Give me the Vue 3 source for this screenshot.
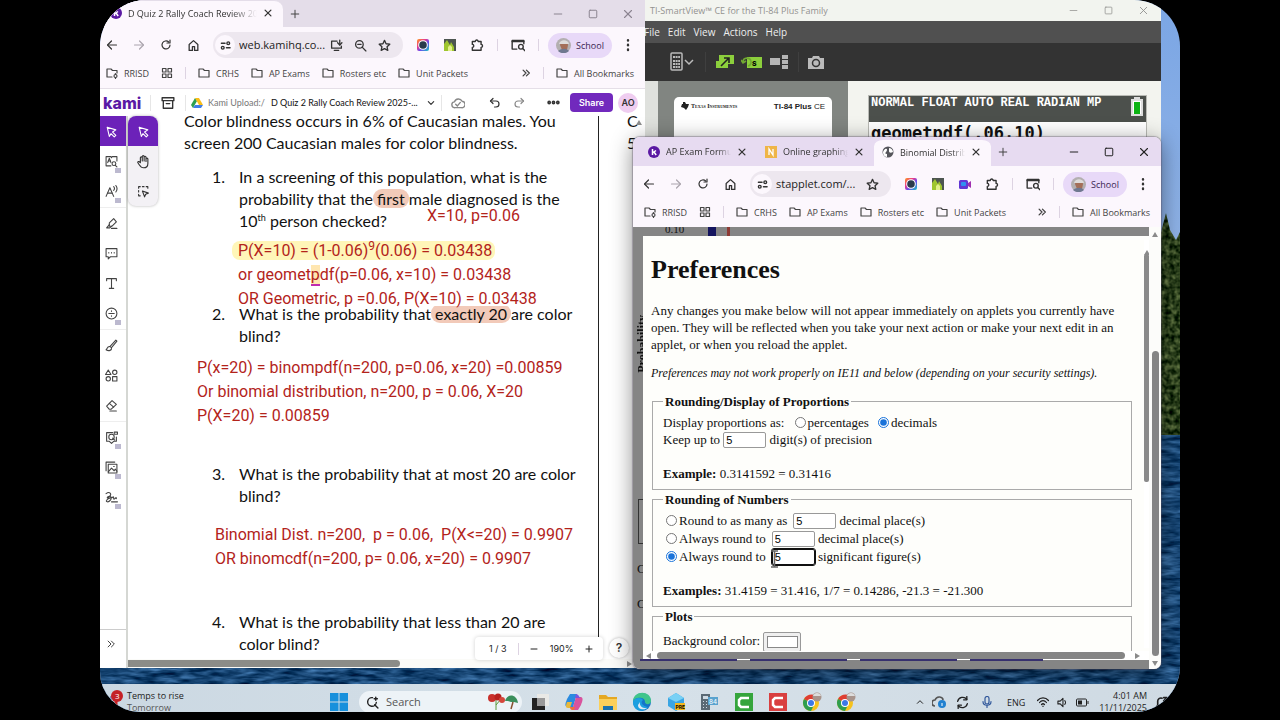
<script setup>
import { h, ref } from 'vue'

const shapes = {
  back: ['M21 12H4', 'M11 4l-8 8 8 8'],
  forward: ['M3 12h17', 'M13 4l8 8-8 8'],
  reload: ['M20 12a8 8 0 1 1-2.6-6', 'M20 2v6h-6'],
  home: ['M4 21V10l8-7 8 7v11h-6v-7h-4v7z'],
  tune: ['M3 7h8', 'M14 17h8', 'M15 7a3 3 0 1 0 6 0a3 3 0 1 0-6 0', 'M3 17a3 3 0 1 0 6 0a3 3 0 1 0-6 0'],
  install: ['M13 4H3v13h18v-4', 'M8 21h8', 'M18 2v9', 'M14 7l4 4 4-4'],
  zoomOut: ['M3 10a7 7 0 1 0 14 0a7 7 0 1 0-14 0', 'M15 15l7 7', 'M7 10h6'],
  star: ['M12 2.500l2.900 6.300 6.900.800-5.100 4.700 1.400 6.800-6.100-3.400-6.100 3.400 1.400-6.800L2.200 9.600l6.900-.800z'],
  puzzle: ['M4 6h5a2.500 2.500 0 1 1 5 0h5v5a2.500 2.500 0 1 1 0 5v5H4v-5a2.500 2.500 0 0 0 0-5z'],
  lens: ['M10 19H2V4h20v6', 'M2 6h20', 'M13 15a4 4 0 1 0 8 0a4 4 0 1 0-8 0', 'M20 18l4 4'],
  dots: ['M12 3.500v1', 'M12 11.500v1', 'M12 19.500v1'],
  close: ['M5 5l14 14', 'M19 5L5 19'],
  plus: ['M12 3v18', 'M3 12h18'],
  minus: ['M3 12h18'],
  square: ['M5 3h14a2 2 0 0 1 2 2v14a2 2 0 0 1-2 2H5a2 2 0 0 1-2-2V5a2 2 0 0 1 2-2z'],
  folder: ['M2 20V4h8l3 3h9v13z'],
  folderGear: ['M12 20H2V4h8l3 3h9v5', 'M16 18a3 3 0 1 0 6 0a3 3 0 1 0-6 0', 'M19 13v2', 'M19 21v2'],
  grid: ['M3 3h7v7H3z', 'M14 3h7v7h-7z', 'M3 14h7v7H3z', 'M14 14h7v7h-7z'],
  more: ['M5 5l7 7-7 7', 'M13 5l7 7-7 7'],
  archive: ['M2 3h20v5H2z', 'M4 8v13h16V8', 'M9 13h6'],
  down: ['M4 8l8 8 8-8'],
  up: ['M4 16l8-8 8 8'],
  cloud: ['M7 20a5 5 0 0 1-1-10a7 7 0 0 1 13-1a5.500 5.500 0 0 1-1 11z', 'M8 14l3 3 5-6'],
  undo: ['M8 3L3 8l5 5', 'M3 8h11a6 6 0 0 1 0 12h-3'],
  redo: ['M16 3l5 5-5 5', 'M21 8H10a6 6 0 0 0 0 12h3'],
  ellipsis: ['M2 12a2 2 0 1 0 4 0a2 2 0 1 0-4 0', 'M10 12a2 2 0 1 0 4 0a2 2 0 1 0-4 0', 'M18 12a2 2 0 1 0 4 0a2 2 0 1 0-4 0'],
  pointer: ['M4 4l16 5-6 4 6 6-3 3-6-6-3 5z'],
  hand: ['M7 14V6a1.500 1.500 0 0 1 3 0v5V4a1.500 1.500 0 0 1 3 0v7V5a1.500 1.500 0 0 1 3 0v7V8a1.500 1.500 0 0 1 3 0v7c0 5-3 7-7 7c-5 0-6-4-9-8c-1-2 2-3 4 0z'],
  marquee: ['M3 6V3h3', 'M10 3h3', 'M17 3h3v3', 'M3 10v3', 'M3 17v3h3', 'M10 11l11 4-5 2-2 5z'],
  reader: ['M11 20H2V3h9l1 2 1-2h9v8', 'M5 14l3-8 3 8', 'M6 11h4', 'M13 16a3.500 3.500 0 1 0 7 0a3.500 3.500 0 1 0-7 0', 'M19 19l3 3'],
  speech: ['M2 21L9 5l7 16', 'M5 15h8', 'M16 3c2 2 2 5 0 7', 'M20 1c3 4 3 8 0 12'],
  marker: ['M8 11l8-8 5 6-8 8H8z', 'M8 14l-5 6h6l3-3', 'M12 21h10'],
  comment: ['M2 3h20v15H10l-4 4v-4H2z', 'M7 10v1', 'M12 10v1', 'M17 10v1'],
  text: ['M3 7V3h18v4', 'M12 3v18', 'M8 21h8'],
  maths: ['M2 12a10 10 0 1 0 20 0a10 10 0 1 0-20 0', 'M7 12h10', 'M12 7v1', 'M12 16v1'],
  brush: ['M9 14L20 2l2 2-10 12z', 'M9 14c-5-1-5 5-7 6c5 3 11 1 10-4'],
  shapes: ['M6 2l5 8H1z', 'M14 6a4 4 0 1 0 8 0a4 4 0 1 0-8 0', 'M2 18a4 4 0 1 0 8 0a4 4 0 1 0-8 0', 'M14 14h8v8h-8z'],
  eraser: ['M3 13L13 3l8 7-10 9H8z', 'M8 8l8 7', 'M9 22h12'],
  question: ['M14 3H3v16h5l4 4 4-4h5v-8', 'M7 11a5 5 0 1 0 10 0a5 5 0 1 0-10 0', 'M14 13l4 4', 'M17 2h6v4h-6z'],
  image: ['M6 6h16v16H6z', 'M2 18V2h16', 'M6 20l6-7 5 5 2-3 3 4', 'M16 10h1'],
  signature: ['M2 5c6-5 12 0 6 6c-3 3-5 2-3 0c4-3 9 0 5 6c-4 5-9 3-7 0c3-5 8-3 12-6c2-1 0 5 2 4s4-5 4-1', 'M12 20h11'],
  wifi: ['M1 9c6-7 16-7 22 0', 'M5 13c4-5 10-5 14 0', 'M9 17c2-2 4-2 6 0', 'M12 20v1'],
  speaker: ['M2 9h5l6-6v18l-6-6H2z', 'M17 8c2 2 2 6 0 8'],
  mic: ['M8 5a4 4 0 0 1 8 0v7a4 4 0 0 1-8 0z', 'M4 11c0 10 16 10 16 0', 'M12 19v4'],
  sync: ['M3 10c2-8 12-10 17-4', 'M20 1v6h-6', 'M21 14c-2 8-12 10-17 4', 'M4 23v-6h6'],
  search: ['M19 12a8 8 0 1 1-7-9', 'M16 16l6 6', 'M18 2v6', 'M15 5h6'],
  bell: ['M3 19h17', 'M5 19V10a6 6 0 0 1 8-6', 'M19 13v6', 'M10 22h4', 'M16 3h6l-6 6h6']
}

const Icon = (p) =>
  h(
    'svg',
    { viewBox: '0 0 24 24', width: p.size, height: p.size, fill: 'none', stroke: 'currentColor', 'stroke-width': p.w || 2.4, 'stroke-linecap': 'round', 'stroke-linejoin': 'round', 'aria-hidden': 'true' },
    shapes[p.name].map((d) => h('path', { d }))
  )
Icon.props = ['name', 'size', 'w']

const browsers = [
  {
    id: 'kami',
    url: 'web.kamihq.co...',
    boxIcons: ['install', 'zoomOut', 'star'],
    tabs: [{ title: 'D Quiz 2 Rally Coach Review 2025', icon: 'kami', active: true }],
    extras: ['ring', 'house']
  },
  {
    id: 'applet',
    url: 'stapplet.com/...',
    boxIcons: ['star'],
    tabs: [
      { title: 'AP Exam Formula Sheet', icon: 'kami' },
      { title: 'Online graphing calc', icon: 'note' },
      { title: 'Binomial Distribution', icon: 'globe', active: true }
    ],
    extras: ['ring', 'house', 'camera']
  }
]
const bookmarks = ['CRHS', 'AP Exams', 'Rosters etc', 'Unit Packets']
const toolGroups = [
  [{ n: 'pointer', on: true }, { n: 'reader', lock: true }, { n: 'speech', lock: true }],
  [{ n: 'marker' }, { n: 'comment' }, { n: 'text' }, { n: 'maths', lock: true }],
  [{ n: 'brush' }, { n: 'shapes' }, { n: 'eraser' }],
  [{ n: 'question', lock: true }, { n: 'image', lock: true }, { n: 'signature', lock: true }]
]
const display = ref('decimals')
const digits = ref('5')
const mode = ref('sig')
const rounding = ref([
  { id: 'many', label: 'Round to as many as', unit: 'decimal place(s)', value: '5' },
  { id: 'dec', label: 'Always round to', unit: 'decimal place(s)', value: '5' },
  { id: 'sig', label: 'Always round to', unit: 'significant figure(s)', value: '5' }
])
</script>

<template>
  <div class="stage">
    <main class="desktop">
      <svg class="wallpaper" aria-hidden="true">
        <defs>
          <linearGradient id="sky" x1="0" y1="0" x2="0" y2="1">
            <stop offset="0" stop-color="#7ba6e4" />
            <stop offset="1" stop-color="#b4c9ea" />
          </linearGradient>
          <filter id="water" x="0" y="0" width="100%" height="100%" color-interpolation-filters="sRGB">
            <feTurbulence type="fractalNoise" baseFrequency="0.05 0.22" numOctaves="3" seed="7" />
            <feColorMatrix values="0.5 0 0 0 -0.16  0.6 0 0 0 -0.03  0.7 0 0 0 0.1  0 0 0 0 1" />
          </filter>
          <filter id="forest" x="0" y="0" width="100%" height="100%" color-interpolation-filters="sRGB">
            <feTurbulence type="fractalNoise" baseFrequency="0.2" numOctaves="2" seed="3" />
            <feColorMatrix values="0.7 0 0 0 -0.18  0.7 0 0 0 -0.1  0.5 0 0 0 -0.14  0 0 0 0 1" />
            <feComposite in2="SourceGraphic" operator="in" />
          </filter>
        </defs>
        <rect width="100%" height="100%" fill="url(#sky)" />
        <rect y="430" width="100%" height="290" filter="url(#water)" />
        <path d="M1055 260L1062 228 1066 213 1070 230 1076 240 1080 232V435H1055z" filter="url(#forest)" />
      </svg>

      <section class="window smartview">
        <header class="sv-title">
          <span>TI-SmartView™ CE for the TI-84 Plus Family</span>
          <div class="controls">
            <button aria-label="Minimize"><Icon name="minus" size="9" w="2" /></button>
            <button aria-label="Maximize"><Icon name="square" size="9" w="2" /></button>
            <button aria-label="Close"><Icon name="close" size="11" w="2" /></button>
          </div>
        </header>
        <nav class="sv-menu">
          <a v-for="m in ['File', 'Edit', 'View', 'Actions', 'Help']" :key="m" href="#">{{ m }}</a>
        </nav>
        <div class="sv-tools">
          <svg width="26" height="20" viewBox="0 0 26 20" aria-hidden="true">
            <rect x="1" y="1" width="11" height="17" rx="1" fill="none" stroke="#bbb" stroke-width="1.500" />
            <path d="M3 5h7M3 9h7M3 12h7M3 15h7" stroke="#bbb" stroke-width="1.800" stroke-dasharray="2 .6" />
            <path d="M15 8l4 4 4-4" fill="none" stroke="#bbb" stroke-width="1.500" />
          </svg>
          <i></i>
          <svg width="20" height="14" viewBox="0 0 20 14" aria-hidden="true">
            <path d="M4 0h15v9H4zM1 6h12v7H1z" fill="#8ccf3c" />
            <path d="M6 11l8-8M9 3h5v5" fill="none" stroke="#222" stroke-width="1.600" />
          </svg>
          <svg width="22" height="14" viewBox="0 0 22 14" aria-hidden="true">
            <path d="M6 2h15v11H6z" fill="#8ccf3c" />
            <path d="M2 7a4 4 0 1 1 5 4M0 5l2 3 3-2" fill="none" stroke="#71a832" stroke-width="1.600" />
            <text x="11" y="11" font-size="9" font-weight="700" font-family="Roboto">s</text>
          </svg>
          <svg width="20" height="16" viewBox="0 0 20 16" aria-hidden="true">
            <path d="M1 4h10v7H1zM13 1h6v4h-6zM13 6h6v4h-6zM13 11h6v4h-6z" fill="#b5b5b5" />
          </svg>
          <i></i>
          <svg width="16" height="15" viewBox="0 0 16 15" aria-hidden="true">
            <path d="M0 3h4l1-2h6l1 2h4v11H0z" fill="#bbb" />
            <circle cx="8" cy="8" r="3.500" fill="none" stroke="#333" stroke-width="1.500" />
          </svg>
        </div>
        <div class="sv-body">
          <div class="sv-keys">
            <div class="calculator">
              <svg width="8" height="8" viewBox="0 0 8 8" aria-hidden="true"><path d="M2 0h2l1 2h3l-1 3-2 3-2-2-3-1 1-3h1z" fill="#222" /></svg>
              <b class="ti">Texas Instruments</b>
              <span class="model"><b>TI-84 Plus</b> CE</span>
            </div>
          </div>
          <div class="sv-screen">
            <div class="lcd">
              <div class="status">
                <span>NORMAL FLOAT AUTO REAL RADIAN MP</span>
                <svg width="12" height="20" viewBox="0 0 12 20" aria-hidden="true">
                  <path d="M3 0h6v2h3v17H0V2h3z" fill="#ddd" /><path d="M2 4h8v13H2z" fill="#fff" /><path d="M3 5h6v12H3z" fill="#0db314" />
                </svg>
              </div>
              <div class="entry">geometpdf(.06,10)</div>
            </div>
          </div>
        </div>
      </section>

      <section v-for="b in browsers" :key="b.id" class="window chrome" :class="b.id">
        <header class="strip">
          <div v-for="t in b.tabs" :key="t.title" class="tab" :class="{ active: t.active }">
            <svg v-if="t.icon === 'kami'" width="12" height="12" viewBox="0 0 12 12" aria-hidden="true">
              <circle cx="6" cy="6" r="6" fill="#5b19a3" />
              <path d="M4.500 3v6M8 4.500L5 6.700M6 6l2.200 3" stroke="#fff" stroke-width="1.500" fill="none" />
            </svg>
            <svg v-else-if="t.icon === 'note'" width="12" height="12" viewBox="0 0 12 12" aria-hidden="true">
              <rect width="12" height="12" fill="#efb548" />
              <path d="M4 9V3l4 6V3" stroke="#fff" stroke-width="1.300" fill="none" />
            </svg>
            <svg v-else width="12" height="12" viewBox="0 0 12 12" aria-hidden="true">
              <circle cx="6" cy="6" r="5.500" fill="#55555b" />
              <path d="M2 4c3-3 4 0 2 2c-1 1-1 2 1 2v3c-3 0-4-3-4-5zM7 2c3 0 4 3 4 4c-2 1-4 1-4-1z" fill="#fff" />
            </svg>
            <span class="tab-title">{{ t.title }}</span>
            <button aria-label="Close tab"><Icon name="close" size="10" w="3" /></button>
          </div>
          <button class="new-tab" aria-label="New tab"><Icon name="plus" size="10" w="2.400" /></button>
          <div class="controls">
            <button aria-label="Minimize"><Icon name="minus" size="10" w="2.400" /></button>
            <button aria-label="Maximize"><Icon name="square" size="10" w="2.400" /></button>
            <button aria-label="Close"><Icon name="close" size="12" w="2.200" /></button>
          </div>
        </header>

        <div class="toolbar">
          <button aria-label="Back"><Icon name="back" size="12" /></button>
          <button aria-label="Forward" class="dim"><Icon name="forward" size="12" /></button>
          <button aria-label="Reload"><Icon name="reload" size="12" /></button>
          <button aria-label="Home"><Icon name="home" size="13" /></button>
          <div class="omnibox">
            <span class="site"><Icon name="tune" size="11" w="3" /></span>
            <input type="text" aria-label="Address" :value="b.url" />
            <button v-for="i in b.boxIcons" :key="i" :aria-label="i"><Icon :name="i" size="13" /></button>
          </div>
          <template v-for="e in b.extras" :key="e">
            <svg v-if="e === 'ring'" width="14" height="14" viewBox="0 0 14 14" aria-hidden="true">
              <defs>
                <linearGradient :id="'rb' + b.id" x1="0" y1="0" x2="1" y2="1">
                  <stop offset="0" stop-color="#ff9b1a" /><stop offset=".35" stop-color="#ea3a8c" /><stop offset=".6" stop-color="#6a4df0" /><stop offset="1" stop-color="#18c8c0" />
                </linearGradient>
              </defs>
              <rect x="1" y="1" width="12" height="12" rx="2" :fill="`url(#rb${b.id})`" />
              <circle cx="7" cy="7" r="4.800" fill="#fff" /><circle cx="7" cy="7" r="3.800" fill="#2a3a4c" />
            </svg>
            <svg v-else-if="e === 'house'" width="14" height="14" viewBox="0 0 14 14" aria-hidden="true">
              <rect x="1" y="1" width="12" height="12" fill="#4d5550" />
              <path d="M1 13V6l3-4 3 5 1-3 3 5v4z" fill="#9fc62f" /><path d="M5 13V9l2-2 2 2v4z" fill="#e2f08a" />
            </svg>
            <svg v-else width="14" height="14" viewBox="0 0 14 14" aria-hidden="true">
              <rect x="1" y="3" width="9" height="9" rx="1.500" fill="#6136d4" /><path d="M10 6l3-2v7l-3-2z" fill="#a02fb0" /><rect x="3" y="5" width="5" height="4" rx="1" fill="#2f8ff0" />
            </svg>
          </template>
          <button aria-label="Extensions"><Icon name="puzzle" size="14" /></button>
          <i class="bar"></i>
          <button aria-label="Search with Lens"><Icon name="lens" size="14" /></button>
          <i class="bar tight"></i>
          <button class="profile">
            <svg width="15" height="15" viewBox="0 0 15 15" aria-hidden="true">
              <circle cx="7.500" cy="7.500" r="7.500" fill="#b3afb0" />
              <path d="M4 7c0-5 8-5 8 0l-1 5H6z" fill="#a46f58" /><path d="M3 6c1-5 9-5 10 0z" fill="#dedcda" /><path d="M2 13c4-3 8-3 11 0a8 8 0 0 1-11 0z" fill="#6f7890" />
            </svg>
            School
          </button>
          <button aria-label="Menu"><Icon name="dots" size="14" w="4" /></button>
        </div>

        <nav class="bookmarks">
          <a href="#"><Icon name="folderGear" size="12" />RRISD</a>
          <a href="#" aria-label="Tab groups"><Icon name="grid" size="12" /></a>
          <i class="bar"></i>
          <a v-for="m in bookmarks" :key="m" href="#"><Icon name="folder" size="12" />{{ m }}</a>
          <a href="#" class="push" aria-label="More"><Icon name="more" size="10" w="3" /></a>
          <i class="bar"></i>
          <a href="#"><Icon name="folder" size="12" />All Bookmarks</a>
        </nav>

        <template v-if="b.id === 'kami'">
          <div class="kami-head">
            <b class="logo">kami</b>
            <i class="bar"></i>
            <button aria-label="Files"><Icon name="archive" size="14" /></button>
            <i class="bar"></i>
            <svg class="drive" width="12" height="12" viewBox="0 0 12 12" aria-hidden="true">
              <path d="M4 1L0 8l2 3 4-7z" fill="#2c9f50" /><path d="M4 1h4l4 7H8z" fill="#f9bd19" /><path d="M2 11l2-3h8l-2 3z" fill="#3f7de8" />
            </svg>
            <span class="crumb">Kami Upload:/</span>
            <span class="file">D Quiz 2 Rally Coach Review 2025-...</span>
            <button aria-label="File menu" class="caret"><Icon name="down" size="8" w="3.500" /></button>
            <i class="bar"></i>
            <button aria-label="Saved" class="cloud"><Icon name="cloud" size="14" /></button>
            <button aria-label="Undo" class="undo"><Icon name="undo" size="12" /></button>
            <button aria-label="Redo" class="cloud"><Icon name="redo" size="12" /></button>
            <button aria-label="More" class="ell"><Icon name="ellipsis" size="13" w="3" /></button>
            <button class="share">Share</button>
            <span class="who">AO</span>
          </div>

          <div class="kami-body">
            <aside class="side">
              <div v-for="(g, k) in toolGroups" :key="k" class="group">
                <button v-for="t in g" :key="t.n" :class="{ on: t.on }" :aria-label="t.n">
                  <Icon :name="t.n" size="13" w="2" />
                  <span v-if="t.lock" class="lock"></span>
                </button>
              </div>
              <button class="expand" aria-label="Expand"><Icon name="more" size="10" w="2.400" /></button>
            </aside>

            <div class="viewer">
              <div class="pages">
                <article class="page">
                  <p>Color blindness occurs in 6% of Caucasian males. You<br />screen 200 Caucasian males for color blindness.</p>
                  <ol>
                    <li>In a screening of this population, what is the<br />probability that the <mark>first</mark> male diagnosed is the<br />10<sup>th</sup> person checked?</li>
                    <li>What is the probability that <mark class="low">exactly 20</mark> are color<br />blind?</li>
                    <li>What is the probability that at most 20 are color<br />blind?</li>
                    <li>What is the probability that less than 20 are<br />color blind?</li>
                  </ol>
                  <div class="note n1">X=10, p=0.06</div>
                  <div class="note n2">
                    <span class="glow">P(X=10) = (1-0.06)<sup>9</sup>(0.06) = 0.03438</span><br />or geomet<u>p</u>df(p=0.06, x=10) = 0.03438<br />OR Geometric, p =0.06, P(X=10) = 0.03438
                  </div>
                  <div class="note n3">P(x=20) = binompdf(n=200, p=0.06, x=20) =0.00859<br />Or binomial distribution, n=200, p = 0.06, X=20<br />P(X=20) = 0.00859</div>
                  <div class="note n4">Binomial Dist. n=200,&nbsp; p = 0.06,&nbsp; P(X&lt;=20) = 0.9907<br />OR binomcdf(n=200, p= 0.06, x=20) = 0.9907</div>
                </article>
                <article class="page next"><p>C<br />5</p></article>
              </div>
              <div class="hscroll"><span></span><i class="tri right"></i></div>
              <div class="palette">
                <button class="on" aria-label="Select"><Icon name="pointer" size="13" w="2" /></button>
                <button aria-label="Pan"><Icon name="hand" size="15" w="1.800" /></button>
                <button aria-label="Marquee"><Icon name="marquee" size="13" w="2" /></button>
              </div>
              <i class="tri top vtop"></i>
              <div class="pager">
                <span>1 / 3</span><i class="bar"></i>
                <button aria-label="Zoom out"><Icon name="minus" size="8" w="3" /></button>
                <span>190%</span>
                <button aria-label="Zoom in"><Icon name="plus" size="8" w="3" /></button>
              </div>
              <button class="help" aria-label="Help">?</button>
            </div>
          </div>
        </template>

        <div v-else class="applet-body">
          <span class="axis">0.10</span>
          <span class="col blue"></span>
          <span class="col red"></span>
          <span class="prob">Probability</span>
          <span class="frag f1">C</span>
          <span class="frag f2">C</span>
          <span class="frame"></span>
          <div class="dialog">
            <form class="prefs" @submit.prevent>
              <h1>Preferences</h1>
              <p>Any changes you make below will not appear immediately on applets you currently have<br />open. They will be reflected when you take your next action or make your next edit in an<br />applet, or when you reload the applet.</p>
              <p><em>Preferences may not work properly on IE11 and below (depending on your security settings).</em></p>
              <fieldset>
                <legend>Rounding/Display of Proportions</legend>
                <div class="line">
                  Display proportions as:
                  <label class="first"><input v-model="display" type="radio" value="percentages" />percentages</label>
                  <label><input v-model="display" type="radio" value="decimals" />decimals</label>
                </div>
                <div class="line">
                  <label>Keep up to <input v-model="digits" type="text" /> digit(s) of precision</label>
                </div>
                <div class="line example"><b>Example:</b> 0.3141592 = 0.31416</div>
              </fieldset>
              <fieldset class="numbers">
                <legend>Rounding of Numbers</legend>
                <div v-for="r in rounding" :key="r.id" class="line choice">
                  <label><input v-model="mode" type="radio" :value="r.id" />{{ r.label }}</label>
                  <input v-model="r.value" type="text" :aria-label="r.label + ' ' + r.unit" :class="{ focused: r.id === 'sig' }" />
                  {{ r.unit }}
                </div>
                <div class="line example"><b>Examples:</b> 31.4159 = 31.416, 1/7 = 0.14286, -21.3 = -21.300</div>
                <svg class="ibeam" width="9" height="18" viewBox="0 0 9 18" aria-hidden="true"><path d="M1 1h3l.5 1L5 1h3M4.500 2v14M1 17h3l.5-1 .5 1h3" fill="none" stroke="#666" stroke-width="1.500" /></svg>
              </fieldset>
              <fieldset class="plots">
                <legend>Plots</legend>
                <label class="line">Background color: <button type="button" class="swatch" aria-label="Background color"><span></span></button></label>
              </fieldset>
            </form>
            <div class="dlg-h"><i class="tri left"></i><span></span><i class="tri right"></i></div>
            <div class="dlg-v"><i class="tri top"></i><span></span></div>
          </div>
          <span class="purple"></span>
          <div class="outer-v"><i class="tri top"></i><span></span><i class="tri bottom"></i></div>
        </div>
      </section>

      <footer class="taskbar">
        <div class="weather">
          <svg width="18" height="26" viewBox="0 0 18 26" aria-hidden="true">
            <path d="M2 9v14M5 7v14" stroke="#8b8fc0" stroke-width="2" /><path d="M10 10v12" stroke="#c22" stroke-width="3" />
            <circle cx="11" cy="7" r="6" fill="#c42127" /><text x="9" y="10" font-size="8" fill="#fff" font-family="Open Sans">3</text>
          </svg>
          <div>Temps to rise<small>Tomorrow</small></div>
        </div>
        <div class="apps">
          <svg width="18" height="18" viewBox="0 0 18 18" aria-hidden="true"><path d="M0 0h8.500v8.500H0zM9.500 0H18v8.500H9.500zM0 9.500h8.500V18H0zM9.500 9.500H18V18H9.500z" fill="#1790dc" /></svg>
          <label class="search">
            <Icon name="search" size="13" w="2.600" />
            <input type="text" placeholder="Search" aria-label="Search" />
            <svg width="32" height="18" viewBox="0 0 32 18" aria-hidden="true">
              <path d="M9 6v11M9 12l5-6" stroke="#5a9a3a" fill="none" /><circle cx="5" cy="5" r="4" fill="#c9302c" /><circle cx="11" cy="4" r="3.500" fill="#b8211f" /><circle cx="15" cy="7" r="3" fill="#d4483c" />
              <path d="M18 8c2-8 12-7 13 2l-4-1-3 0-3-1z" fill="#3b8f5c" /><path d="M26 9l-2 7" stroke="#87502e" stroke-width="1.500" />
            </svg>
          </label>
          <svg width="20" height="20" viewBox="0 0 20 20" aria-hidden="true"><path d="M7 2h12v12H7z" fill="#e9e9e6" /><path d="M2 6h13v12H2z" fill="#222" /><path d="M7 6h8v8H7z" fill="#999" /></svg>
          <svg width="20" height="20" viewBox="0 0 20 20" aria-hidden="true"><path d="M6 2h7l-4 13H3c-3-1-1-5 0-8z" fill="#2a8be0" /><path d="M3 10h5l-2 6H4c-3 0-2-3-1-6z" fill="#e8b83a" /><path d="M14 18H8l4-13h5c3 1 1 5 0 8z" fill="#d9539d" /><path d="M12 2c3 0 3 4 5 4h-6z" fill="#7a55dd" /><path d="M8 18c-2 0-2-3-2-3h5l-1 3z" fill="#f0703a" /></svg>
          <svg width="20" height="20" viewBox="0 0 20 20" aria-hidden="true"><path d="M1 3h7l2 2h9v13H1z" fill="#e5a823" /><path d="M1 7h18v11H1z" fill="#fbd05a" /><path d="M5 18v-4h10v4z" fill="#1a73ae" /></svg>
          <svg width="20" height="20" viewBox="0 0 20 20" aria-hidden="true"><circle cx="10" cy="10" r="9" fill="#1576c9" /><path d="M1 10C1-2 19-2 19 9c0 4-6 4-6 1c0-6-11-5-12 0z" fill="#3fc58b" /><path d="M1 10c1-5 9-5 10-2c-3 2-1 6 5 7c-4 6-15 5-15-5z" fill="#1c9fe0" /><path d="M8 10c-1 4 3 7 8 6c-4 2-10 2-10-3z" fill="#dceaf4" /></svg>
          <svg width="20" height="20" viewBox="0 0 20 20" aria-hidden="true"><path d="M10 1l8 5v8l-8 5-8-5V6z" fill="#3aa5e3" /><path d="M10 1l8 5-8 4-8-4z" fill="#79d1f5" /><path d="M9 11h10v7H9z" fill="#f4b81f" /><text x="9.500" y="17" font-size="5" font-weight="700" font-family="Roboto">PRE</text></svg>
          <svg width="20" height="20" viewBox="0 0 20 20" aria-hidden="true"><path d="M1 2h9v16H1z" fill="#5b6a75" /><path d="M3 4h5v3H3z" fill="#cfdbe4" /><path d="M3 9h1v1H3zM6 9h1v1H6zM3 12h1v1H3zM6 12h1v1H6zM3 15h1v1H3zM6 15h1v1H6z" fill="#cfdbe4" /><path d="M8 5h10v8H8z" fill="#5aa3cf" /><text x="9" y="12" font-size="7" fill="#fff" font-family="Roboto">84</text></svg>
          <svg width="20" height="20" viewBox="0 0 20 20" aria-hidden="true"><path d="M1 1h18v18H1z" fill="#35a53c" /><path d="M15 6H7L5 8v5l2 2h8" fill="none" stroke="#fff" stroke-width="2.500" /></svg>
          <svg width="20" height="20" viewBox="0 0 20 20" aria-hidden="true"><path d="M1 1h18v18H1z" fill="#d93f3f" /><path d="M15 6H7L5 8v5l2 2h8" fill="none" stroke="#fff" stroke-width="2.500" /></svg>
          <svg v-for="n in 2" :key="n" width="20" height="20" viewBox="0 0 20 20" aria-hidden="true">
            <circle cx="9" cy="11" r="8" fill="#f6c21c" /><path d="M9 11L2 7c3-6 12-6 15 0z" fill="#df3d32" /><path d="M9 11L2 7c-3 5 1 12 7 12l3-6z" fill="#2f9e4f" />
            <circle cx="9" cy="11" r="4" fill="#fff" /><circle cx="9" cy="11" r="3" fill="#3b78e7" /><circle cx="15" cy="5" r="4.500" fill="#a8948c" /><path d="M11 4c1-4 7-4 8 0z" fill="#ddd" />
          </svg>
        </div>
        <div class="tray">
          <Icon name="up" size="8" w="3" />
          <svg width="14" height="14" viewBox="0 0 14 14" aria-hidden="true"><path d="M3 11a3 3 0 0 1 0-6c2-5 8-3 8 0" fill="none" stroke="#555" stroke-width="1.600" /><circle cx="10" cy="9" r="4" fill="#2080d0" /><path d="M10 8v3" stroke="#fff" /></svg>
          <span class="sync"><Icon name="sync" size="13" /></span>
          <span class="mic"><Icon name="mic" size="12" /></span>
          <span class="lang">ENG</span>
          <Icon name="wifi" size="12" />
          <Icon name="speaker" size="11" />
          <svg width="13" height="9" viewBox="0 0 13 9" aria-hidden="true"><rect x=".5" y="1" width="10" height="7" rx="1" fill="none" stroke="#222" /><path d="M2 2.500h4v4H2z" fill="#222" /><path d="M12 3v3" stroke="#222" /></svg>
          <div class="clock">4:01 AM<br />11/11/2025</div>
          <Icon name="bell" size="13" w="3" />
        </div>
      </footer>
    </main>
  </div>
</template>

<style>
html, body { background: #000; overflow: hidden; }
</style>

<style scoped>
* { box-sizing: border-box; }
button { border: 0; padding: 0; margin: 0; background: none; color: inherit; font: inherit; display: flex; align-items: center; justify-content: center; flex: none; }
svg { display: block; flex: none; }
a { color: inherit; text-decoration: none; }
.stage { height: 100vh; padding: 0 100px 8px; background: #000; font-family: "Open Sans", "Noto Sans", sans-serif; font-size: 9px; color: #333; }
.desktop { position: relative; height: 100%; overflow: hidden; border-radius: 46px 46px 46px 40px; }
.wallpaper { position: absolute; inset: 0; width: 100%; height: 100%; }
.window { position: absolute; display: flex; flex-direction: column; overflow: hidden; }
.controls { display: flex; margin-left: auto; }
.controls button { width: 35px; height: 20px; }

/* TI-SmartView */
.smartview { left: 500px; right: 19px; top: 0; height: 400px; background: #f2f4ef; }
.sv-title { display: flex; align-items: center; height: 21px; padding-left: 50px; color: #92928f; white-space: nowrap; }
.sv-menu { display: flex; align-items: center; gap: 8px; height: 22px; padding-left: 44px; background: #505050; color: #eee; font-size: 10px; }
.sv-tools { display: flex; align-items: center; gap: 6px; height: 38px; padding-left: 70px; background: #333; }
.sv-tools i { width: 1px; height: 20px; margin: 0 3px; background: #3f3f3f; }
.sv-body { flex: 1; display: flex; padding-left: 58px; background: #dfe1dd; }
.sv-keys { width: 190px; padding: 16px 16px 0; background: #818581; }
.calculator { display: flex; align-items: flex-start; gap: 2px; height: 300px; padding: 5px 7px 0; border-radius: 5px; background: #fff; color: #222; white-space: nowrap; }
.ti { font: 700 6px/8px "Liberation Serif", serif; font-variant: small-caps; }
.model { margin-left: auto; font: 8px/9px "Liberation Sans", sans-serif; }
.sv-screen { flex: 1; padding: 14px 14px 0 20px; background: #f3f4ef; }
.lcd { height: 200px; border: 1px solid #b9bab5; background: #fff; overflow: hidden; }
.status { display: flex; justify-content: space-between; align-items: flex-start; height: 26px; padding: 1px 3px 0 2px; background: #4c504c; color: #fff; font: 700 12px/12px "Liberation Mono", monospace; white-space: nowrap; }
.entry { padding: 2px; color: #111; font: 700 17px/18px "DejaVu Sans Mono", monospace; white-space: nowrap; }

/* Browser frame */
.chrome { background: #fcf7fd; }
.chrome.kami { left: 0; right: 535px; top: 0; bottom: 44px; border-radius: 0 0 6px 0; }
.chrome.applet { left: 533px; right: 19px; top: 137px; bottom: 43px; border-radius: 7px; box-shadow: 0 0 1px 1px rgba(90, 80, 100, .4), 0 4px 22px rgba(0, 0, 0, .45); }
.strip { display: flex; align-items: center; height: 27px; padding-left: 2px; background: #e4dde9; flex: none; }
.applet .strip { height: 29px; padding-left: 7px; background: #e7dbf1; }
.kami .controls { color: #8b8490; }
.applet .controls { color: #222; }
.tab { display: flex; align-items: center; gap: 6px; width: 117px; height: 23px; padding: 0 10px 0 8px; }
.kami .tab { width: 181px; }
.tab.active { height: 100%; border-top: 3px solid #e4dde9; background: #fcf7fd; border-radius: 9px 9px 0 0; }
.kami .tab.active { border-top-width: 1px; padding-bottom: 2px; }
.applet .tab.active { border-top-color: #e7dbf1; padding-bottom: 2px; }
.tab-title { flex: 1; overflow: hidden; white-space: nowrap; -webkit-mask-image: linear-gradient(90deg, #000 80%, transparent); mask-image: linear-gradient(90deg, #000 80%, transparent); }
.new-tab { width: 24px; height: 20px; color: #444; }
.toolbar { display: flex; align-items: center; gap: 13px; height: 36px; padding: 0 10px 0 5px; flex: none; color: #333; }
.applet .toolbar { padding: 0 11px 0 9px; }
.toolbar > button { width: 14px; height: 20px; }
.dim { color: #aaa4ad; }
.omnibox { flex: 1; min-width: 0; display: flex; align-items: center; gap: 11px; height: 26px; padding: 0 12px 0 2px; border-radius: 13px; background: #ede7ef; }
.site { display: flex; align-items: center; justify-content: center; width: 20px; height: 20px; border-radius: 50%; background: #fcf7fd; flex: none; }
.omnibox input { flex: 1; min-width: 0; margin: 0 -8px 0 -7px; padding: 0; border: 0; outline: 0; background: none; font: 11px/16px "Open Sans", sans-serif; color: #222; }
.bar { width: 1px; height: 12px; background: #ddd3e2; flex: none; }
.toolbar .tight { margin-right: -4px; }
.toolbar > .profile { width: 64px; height: 25px; gap: 5px; margin-right: -4px; border-radius: 13px; background: #e8d9f8; color: #3a2552; }
.bookmarks { display: flex; align-items: center; gap: 12px; height: 25px; padding: 0 11px 5px 6px; flex: none; white-space: nowrap; color: #444; }
.applet .bookmarks { padding-left: 11px; }
.bookmarks a { display: flex; align-items: center; gap: 6px; }
.bookmarks .push { margin-left: auto; }

/* Kami */
.kami-head { display: flex; align-items: center; height: 28px; padding: 0 7px 0 3px; border-top: 1px solid #e5dfe8; background: #fff; color: #333; flex: none; white-space: nowrap; }
.logo { width: 47px; color: #5a19a5; font: 800 16px/16px Inter, sans-serif; }
.kami-head > .bar { height: 16px; background: #e6e6e6; }
.kami-head button { margin: 0 10px; }
.kami-head .drive { margin: 0 5px; }
.crumb { color: #777; font: 9px/12px Lato, sans-serif; }
.file { margin-left: 6px; font: 9px/12px Lato, sans-serif; color: #111; flex: 1; min-width: 0; overflow: hidden; }
.kami-head .caret { margin: 0 6px; }
.kami-head .cloud { margin: 0 9px; color: #888; }
.kami-head .undo { margin: 0 3px 0 15px; }
.kami-head .ell { margin: 0 9px 0 13px; }
.kami-head .share { width: 43px; height: 19px; margin: 0 5px 0 1px; border-radius: 4px; background: #7129bd; color: #fff; font: 600 9px/12px Inter, sans-serif; }
.who { width: 20px; height: 20px; border-radius: 50%; background: #efcdf0; text-align: center; font: 600 9px/20px Inter, sans-serif; }
.kami-body { flex: 1; display: flex; min-height: 0; background: #fff; }
.side { display: flex; flex-direction: column; width: 26px; flex: none; color: #444; }
.group { border-bottom: 1px solid #eee; padding-bottom: 1px; }
.group:nth-child(4) { border: 0; }
.side button { position: relative; width: 26px; height: 30px; padding-right: 4px; }
.side .on, .palette .on { background: #6c22b9; color: #fff; }
.lock { position: absolute; right: 5px; bottom: 3px; width: 6px; height: 5px; background: #bcb9cf; }
.side .expand { margin-top: auto; height: 39px; padding-bottom: 10px; border-top: 1px solid #ccc; }
.viewer { position: relative; flex: 1; min-width: 0; display: flex; flex-direction: column; border-left: 2px solid #d5d7d3; }
.pages { flex: 1; min-height: 0; display: flex; overflow: hidden; font: 16px/22px Lato, sans-serif; color: #111; white-space: nowrap; }
.page { position: relative; z-index: 0; width: 471px; flex: none; height: 522px; border-right: 1px solid #222; }
.page p { margin: -6px 0 0 56px; }
.page.next { border: 0; margin-left: 28px; width: 100px; }
.page.next p { margin-left: 0; }
ol { margin: 12px 0 0; padding: 0 0 0 111px; list-style: none; counter-reset: q; }
li { position: relative; counter-increment: q; }
li::before { content: counter(q) "."; position: absolute; left: -27px; }
li:nth-child(2) { margin-top: 71px; }
li:nth-child(3) { margin-top: 116px; }
li:nth-child(4) { margin-top: 104px; }
sup { font-size: 9px; line-height: 0; vertical-align: 6px; }
mark { background: #f2cab9; color: inherit; border-radius: 9px; padding: 0 4px; margin: 0 -4px; }
mark.low { background: linear-gradient(#f2cab9, #f2cab9) 0 100% / 100% 17px no-repeat; }
.note { position: absolute; font: 16px/24px Roboto, sans-serif; color: #b3231b; }
.n1 { left: 299px; top: 88px; }
.n2 { left: 110px; top: 123px; }
.n3 { left: 69px; top: 240px; }
.n4 { left: 87px; top: 407px; }
.note sup { font-size: 12px; }
.glow { padding: 0 3px 0 6px; margin-left: -6px; border-radius: 8px; background: #fff6b8; }
.note u { text-decoration: none; border-bottom: 2px solid #c02bb0; background: #ffe6b0; }
.hscroll { display: flex; align-items: center; height: 9px; padding-right: 13px; background: #fbfbf8; flex: none; }
.hscroll span { width: 54%; height: 7px; background: #8b8c88; border-radius: 0 4px 4px 0; }
.hscroll .tri { margin-left: auto; }
.palette { position: absolute; left: 0; top: 0; width: 30px; border-radius: 8px; overflow: hidden; background: #f3f1f5; box-shadow: 0 0 3px rgba(0, 0, 0, .3); color: #333; }
.palette button { width: 30px; height: 30px; }
.tri { width: 0; height: 0; border: 3px solid transparent; flex: none; }
.tri.top { border-bottom: 5px solid #8a8a8a; border-top: 0; }
.tri.bottom { border-top: 5px solid #8a8a8a; border-bottom: 0; }
.tri.left { border-right: 5px solid #8a8a8a; border-left: 0; }
.tri.right { border-left: 5px solid #8a8a8a; border-right: 0; }
.vtop { position: absolute; z-index: 2; right: 3px; top: 4px; }
.pager { position: absolute; right: 42px; bottom: 8px; width: 128px; height: 23px; display: flex; align-items: center; justify-content: space-between; padding: 0 10px 0 14px; background: #fff; border-radius: 4px; box-shadow: 0 0 4px rgba(0, 0, 0, .18); color: #222; font: 9px/12px Inter, sans-serif; }
.help { position: absolute; right: 16px; bottom: 10px; width: 20px; height: 20px; border-radius: 50%; background: #fff; box-shadow: 0 0 3px rgba(0, 0, 0, .3); font: 600 12px/20px Inter, sans-serif; }

/* Applet page behind its dialog */
.applet-body { position: relative; flex: 1; min-height: 0; display: flex; padding: 9px 0 9px 10px; background: #858585; color: #111; overflow: hidden; font-family: "Liberation Serif", serif; }
.axis { position: absolute; left: 32px; top: -5px; font-size: 11px; line-height: 14px; }
.col { position: absolute; top: 0; height: 9px; }
.blue { left: 75px; width: 8px; background: #14145e; }
.red { left: 94px; width: 3px; background: #8d3a34; }
.prob { position: absolute; left: 3px; top: 88px; font: 700 12px/12px "Liberation Serif", serif; writing-mode: vertical-rl; transform: rotate(180deg); }
.frag { position: absolute; left: 4px; font-size: 13px; }
.f1 { top: 334px; }
.f2 { top: 369px; }
.frame { position: absolute; left: 5px; top: 272px; width: 20px; height: 45px; border: 1px solid #333; }
.purple { position: absolute; left: 7px; right: 118px; bottom: 8px; height: 2px; background: repeating-linear-gradient(90deg, #37306e 0 97px, transparent 97px 110px); }
.dialog { position: relative; flex: 1; min-width: 0; display: flex; flex-direction: column; background: #fefefb; }
.prefs { flex: 1; min-height: 0; overflow: hidden; padding: 0 17px 0 8px; font-size: 13px; line-height: 17px; white-space: nowrap; }
h1 { margin: 18px 0 16px; font-size: 26px; line-height: 32px; }
.prefs p { margin: 0 0 11px; line-height: 17px; }
.prefs em { font-size: 12px; }
fieldset { position: relative; min-width: 0; margin: 0 0 1px 1px; padding: 4px 10px 7px; border: 1px solid #aaa; }
legend { padding: 0 2px; font-weight: 700; line-height: 17px; }
.line { height: 17px; display: block; }
.example { margin-top: 17px; }
.choice { height: 18px; }
.numbers { padding-top: 4px; padding-bottom: 7px; }
.numbers .example { margin-top: 16px; }
.prefs input[type="radio"] { width: 11px; height: 11px; margin: 0 2px 0 3px; vertical-align: -1px; accent-color: #1a73d9; }
.first { margin: 0 6px 0 4px; }
.prefs input[type="text"] { width: 43px; height: 16px; padding: 0 2px; border: 1px solid #999; border-radius: 2px; background: #fff; font: 11px/14px "Liberation Sans", sans-serif; vertical-align: 0; }
.prefs .choice input[type="text"] { margin: 0 0 0 6px; }
.prefs input.focused { outline: 1px solid #111; border-color: #111; }
.ibeam { position: absolute; left: 117px; top: 42px; }
.plots { height: 60px; padding-top: 7px; }
.swatch { display: inline-flex; width: 38px; height: 20px; border: 1px solid #999; border-radius: 2px; background: #efefef; vertical-align: middle; }
.swatch span { width: 31px; height: 12px; border: 1px solid #888; background: #fff; }
.dlg-h { display: flex; align-items: center; height: 9px; padding: 0 9px 0 3px; gap: 6px; background: #fff; flex: none; }
.dlg-h span { flex: 1; margin-right: 4px; height: 7px; border-radius: 4px; background: #858585; }
.dlg-v { position: absolute; right: 0; top: 4px; bottom: 12px; width: 5px; overflow: hidden; background: #fff; }
.dlg-v span { display: block; height: 228px; margin-top: 4px; border-radius: 2px; background: #8a8a8a; }
.outer-v { display: flex; flex-direction: column; align-items: center; width: 12px; margin: -9px 0; padding: 5px 0 3px; background: #fcfcfa; flex: none; }
.outer-v span { width: 7px; height: 305px; margin: auto 0 5px; border-radius: 4px; background: #858585; }

/* Taskbar */
.taskbar { position: absolute; left: 0; right: 0; bottom: -8px; height: 36px; display: flex; align-items: center; padding: 0 12px 0 6px; background: linear-gradient(90deg, #cbd8e2, #d6e1e9 50%, #cfdae3); color: #222; white-space: nowrap; }
.weather { display: flex; align-items: center; gap: 3px; width: 224px; flex: none; line-height: 12px; }
.weather small { display: block; font-size: 9px; color: #555; }
.apps { display: flex; align-items: center; gap: 14px; }
.search { display: flex; align-items: center; gap: 7px; width: 163px; height: 22px; margin: 0 -6px 0 -3px; padding: 0 3px 0 7px; border-radius: 11px; background: #edf3f7; }
.search input { flex: 1; min-width: 0; padding: 0; border: 0; background: none; font: 11px/14px "Open Sans", sans-serif; }
.search input::placeholder { color: #555; opacity: 1; }
.tray { display: flex; align-items: center; gap: 8px; margin-left: auto; }
.sync, .mic { margin: 0 2px; }
.mic { color: #31589b; }
.lang { margin: 0 4px; }
.clock { margin-left: 2px; text-align: right; line-height: 12px; }
</style>
